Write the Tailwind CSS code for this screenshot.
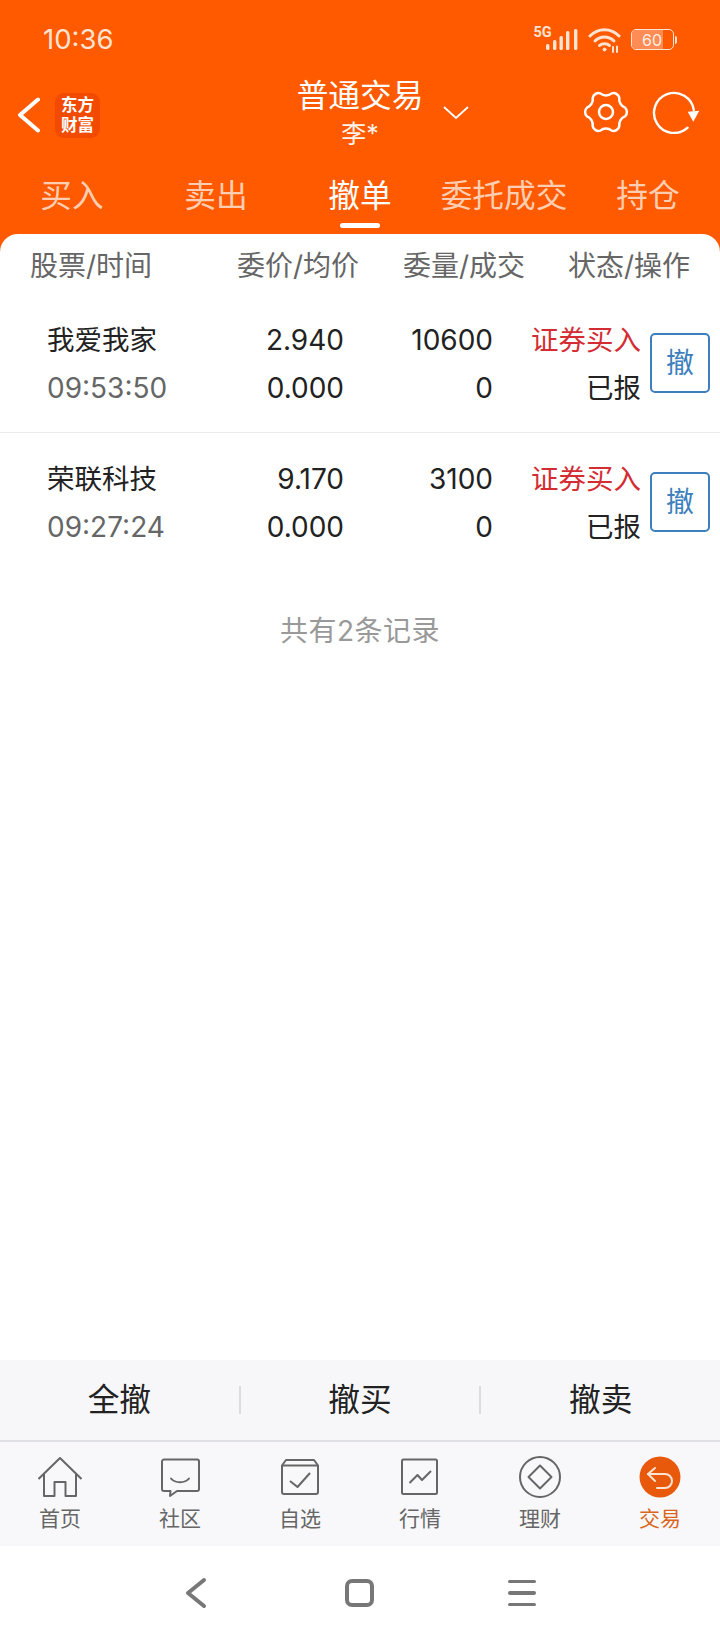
<!DOCTYPE html>
<html lang="zh-CN">
<head>
<meta charset="utf-8">
<script src="https://cdn.jsdelivr.net/npm/@tailwindcss/browser@4"></script>
</head>
<body class="m-0">
<div class="w-[720px] h-[1640px] flex flex-col bg-white overflow-hidden font-['Inter','Noto_Sans_CJK_SC',sans-serif]">

  <div class="bg-[#ff5a00]">
    <!-- status bar -->
    <div class="h-[78px] flex items-center justify-between pl-[43px] pr-[43px] pt-[1px]">
      <span class="text-[27.500px] leading-none text-[#fde3d2]">10:36</span>
      <div class="flex items-center gap-[10px]">
        <div class="relative w-[43px] h-[26px]">
          <span class="absolute left-[-1px] top-[-2px] text-[14.500px] leading-[16px] font-bold text-[#fde3d2] font-['Roboto']">5G</span>
          <svg width="43" height="26" viewBox="0 0 43 26" class="text-[#fde3d2]">
            <g fill="currentColor">
              <rect x="11" y="17" width="3.400" height="6" rx="1.500"/>
              <rect x="18" y="13" width="3.400" height="10" rx="1.500"/>
              <rect x="24.500" y="9" width="3.400" height="14" rx="1.500"/>
              <rect x="31" y="4" width="3.400" height="19" rx="1.500"/>
              <rect x="39" y="2" width="3.400" height="21" rx="1.500"/>
            </g>
          </svg>
        </div>
        <svg width="33" height="26" viewBox="0 0 33 26" fill="none" stroke="#fde3d2" stroke-width="3" stroke-linecap="round">
          <path d="M2 9C10 0.500 23 0.500 31 9"/>
          <path d="M7 14C12 8.500 21 8.500 26 14"/>
          <path d="M11.500 18.500C14 16 19 16 21.500 18.500"/>
          <circle cx="16.500" cy="22.500" r="1.500" fill="#fde3d2" stroke-width="1"/>
          <path d="M25 20V25M29 19.500V25" stroke-width="2"/>
        </svg>
        <div class="flex items-center gap-[1px]">
          <div class="relative w-[43px] h-[21px] rounded-[5px] border-[1.500px] border-[#fde3d2] overflow-hidden flex items-center justify-center">
            <div class="absolute left-0 top-0 bottom-0 w-[31px] bg-[#ff8b55]"></div>
            <span class="relative text-[16px] leading-none text-[#fff0e6]">60</span>
          </div>
          <div class="w-[2.500px] h-[8px] rounded-r-full bg-[#fde3d2]"></div>
        </div>
      </div>
    </div>

    <!-- title bar -->
    <div class="relative h-[78px] flex items-center justify-between pl-[17px] pr-[19px]">
      <div class="flex items-center gap-[15px] mt-[-4px]">
        <svg width="23" height="36" viewBox="0 0 23 36" fill="none" stroke="#fff" stroke-width="4" stroke-linecap="round" stroke-linejoin="round">
          <path d="M21 2.500L3 18L21 33.500"/>
        </svg>
        <div class="w-[45px] h-[45px] rounded-[9px] bg-[#f24b00] flex flex-col items-center justify-center text-white text-[16.500px] leading-[20px] font-bold">
          <span>东方</span><span>财富</span>
        </div>
      </div>
      <div class="absolute left-0 right-0 top-0 flex flex-col items-center text-white pointer-events-none">
        <span class="text-[31.700px] leading-[36px]">普通交易</span>
        <span class="text-[25px] leading-[30px] mt-[5px] text-[#fff3ea]">李*</span>
      </div>
      <svg width="26" height="15" viewBox="0 0 26 15" fill="none" stroke="#fff" stroke-width="1.800" class="absolute left-[443px] top-[27px]">
        <path d="M1 2L13 13L25 2"/>
      </svg>
      <div class="flex items-center gap-[22px] mt-[-10px]">
        <svg width="46" height="46" viewBox="-23 -23 46 46" fill="none" stroke="#fff" stroke-width="2.500">
          <path d="M19 -4.390A6 6 0 0 1 19 4.390A9 9 0 0 0 13.300 14.260A6 6 0 0 1 5.700 18.650A9 9 0 0 0 -5.700 18.650A6 6 0 0 1 -13.300 14.260A9 9 0 0 0 -19 4.390A6 6 0 0 1 -19 -4.390A9 9 0 0 0 -13.300 -14.260A6 6 0 0 1 -5.700 -18.650A9 9 0 0 0 5.700 -18.650A6 6 0 0 1 13.300 -14.260A9 9 0 0 0 19 -4.390Z"/>
          <circle r="7"/>
        </svg>
        <svg width="50" height="44" viewBox="0 0 50 44" fill="none">
          <path d="M42.800 20A20 20 0 1 0 36.600 37.700" stroke="#fff" stroke-width="2.400" stroke-linecap="round"/>
          <path d="M36.700 21.700L48.300 20.700L42.300 31.700Z" fill="#fff"/>
        </svg>
      </div>
    </div>

    <!-- tabs -->
    <div class="relative h-[78px] grid grid-cols-5 text-center text-[31.700px] leading-[40px] text-[#ffcdb2]">
      <div class="mt-[20px]">买入</div>
      <div class="mt-[20px]">卖出</div>
      <div class="mt-[20px] text-white">撤单</div>
      <div class="mt-[20px]">委托成交</div>
      <div class="mt-[20px]">持仓</div>
      <div class="absolute left-[340px] top-[67px] w-[40px] h-[5px] rounded-full bg-white"></div>
    </div>
  </div>

  <!-- list -->
  <div class="flex-1 bg-[#ff5a00] min-h-0">
    <div class="h-full bg-white rounded-t-[18px]">
      <div class="h-[61px] flex items-center text-[28px] leading-none text-[#666] pt-[3px]">
        <span class="w-[359px] pl-[30px] flex justify-between"><span>股票/时间</span><span>委价/均价</span></span>
        <span class="w-[166px] text-right">委量/成交</span>
        <span class="w-[165px] text-right">状态/操作</span>
      </div>

      <div class="h-[138px] flex items-center border-b border-[#ececec]">
        <div class="w-[344px] pl-[47px] flex justify-between text-[28px] leading-[48px] text-[#222]">
          <div><div class="text-[27.500px]">我爱我家</div><div class="text-[#666]">09:53:50</div></div>
          <div class="text-right"><div>2.940</div><div>0.000</div></div>
        </div>
        <div class="w-[149px] text-right text-[28px] leading-[48px] text-[#222]"><div>10600</div><div>0</div></div>
        <div class="w-[148px] text-right text-[27.500px] leading-[48px] text-[#222]"><div class="text-[#d42c33]">证券买入</div><div>已报</div></div>
        <div class="ml-[9px] mt-[-2px] w-[60px] h-[60px] rounded-[5px] border-2 border-[#3d7fbd] text-[#3d7fbd] text-[28px] flex items-center justify-center">撤</div>
      </div>

      <div class="h-[139px] flex items-center">
        <div class="w-[344px] pl-[47px] flex justify-between text-[28px] leading-[48px] text-[#222]">
          <div><div class="text-[27.500px]">荣联科技</div><div class="text-[#666]">09:27:24</div></div>
          <div class="text-right"><div>9.170</div><div>0.000</div></div>
        </div>
        <div class="w-[149px] text-right text-[28px] leading-[48px] text-[#222]"><div>3100</div><div>0</div></div>
        <div class="w-[148px] text-right text-[27.500px] leading-[48px] text-[#222]"><div class="text-[#d42c33]">证券买入</div><div>已报</div></div>
        <div class="ml-[9px] mt-[-2px] w-[60px] h-[60px] rounded-[5px] border-2 border-[#3d7fbd] text-[#3d7fbd] text-[28px] flex items-center justify-center">撤</div>
      </div>

      <div class="text-center text-[28px] leading-[40px] tracking-[0.500px] text-[#999] mt-[39px]">共有2条记录</div>
    </div>
  </div>

  <!-- bulk actions -->
  <div class="h-[82px] bg-[#f7f7fa] border-b-2 border-[#dfe0e3] flex items-center text-[31.700px] leading-none text-[#222]">
    <div class="flex-1 text-center">全撤</div>
    <div class="w-[2px] h-[28px] bg-[#dcdce0]"></div>
    <div class="flex-1 text-center">撤买</div>
    <div class="w-[2px] h-[28px] bg-[#dcdce0]"></div>
    <div class="flex-1 text-center">撤卖</div>
  </div>

  <!-- tab bar -->
  <div class="h-[104px] bg-[#f8f8fa] grid grid-cols-6 text-[21px] leading-[28px] text-[#666] pt-[14px]">
    <div class="flex flex-col items-center">
      <svg width="44" height="44" viewBox="0 0 44 44" fill="none" stroke="#666" stroke-width="2" stroke-linejoin="round">
        <path d="M0.500 23L22 2L43.500 23"/>
        <path d="M6 17V40H16.500V26H27.500V40H38V17"/>
      </svg>
      <span class="mt-[5px]">首页</span>
    </div>
    <div class="flex flex-col items-center">
      <svg width="44" height="44" viewBox="0 0 44 44" fill="none" stroke="#666" stroke-width="2" stroke-linejoin="round">
        <path d="M6 3.500H39A2 2 0 0 1 41 5.500V33A2 2 0 0 1 39 35H19L12 40L12.500 35H6A2 2 0 0 1 4 33V5.500A2 2 0 0 1 6 3.500Z"/>
        <path d="M13 22.500C17 27.500 27 27.500 31 22.500" stroke-linecap="round"/>
      </svg>
      <span class="mt-[5px]">社区</span>
    </div>
    <div class="flex flex-col items-center">
      <svg width="44" height="44" viewBox="0 0 44 44" fill="none" stroke="#666" stroke-width="2" stroke-linejoin="round">
        <path d="M8 4H36L40 9.500V36A2 2 0 0 1 38 38H6A2 2 0 0 1 4 36V9.500Z"/>
        <path d="M4 9.500H40"/>
        <path d="M12 25L19.500 31L32 17"/>
      </svg>
      <span class="mt-[5px]">自选</span>
    </div>
    <div class="flex flex-col items-center">
      <svg width="44" height="44" viewBox="0 0 44 44" fill="none" stroke="#666" stroke-width="2" stroke-linejoin="round">
        <rect x="4" y="3.500" width="35" height="34.500" rx="1.500"/>
        <path d="M11.500 27L19.500 19L24 24L33 15"/>
      </svg>
      <span class="mt-[5px]">行情</span>
    </div>
    <div class="flex flex-col items-center">
      <svg width="44" height="44" viewBox="0 0 44 44" fill="none" stroke="#666" stroke-width="2" stroke-linejoin="round">
        <circle cx="22" cy="21" r="20"/>
        <path d="M22 9.500L33.500 21L22 32.500L10.500 21Z"/>
      </svg>
      <span class="mt-[5px]">理财</span>
    </div>
    <div class="flex flex-col items-center text-[#d9661f]">
      <svg width="44" height="44" viewBox="0 0 44 44" fill="none" stroke="#fde3d2" stroke-width="2" stroke-linecap="round" stroke-linejoin="round">
        <circle cx="22" cy="21" r="20.500" fill="#e8590c" stroke="none"/>
        <path d="M17 12L10 18L17 25"/>
        <path d="M10 18H27A7 7 0 0 1 27 32H19"/>
      </svg>
      <span class="mt-[5px]">交易</span>
    </div>
  </div>

  <!-- system nav -->
  <div class="h-[94px] bg-white flex items-center pl-[184px]">
    <svg width="24" height="32" viewBox="0 0 24 32" fill="none" stroke="#777" stroke-width="4" stroke-linecap="round" stroke-linejoin="round">
      <path d="M20 3L4 16L20 29"/>
    </svg>
    <div class="ml-[137px] w-[29px] h-[28px] rounded-[7px] border-[4px] border-[#777]"></div>
    <div class="ml-[134px] w-[28px] flex flex-col gap-[8px]">
      <div class="h-[3.500px] rounded-full bg-[#777]"></div>
      <div class="h-[3.500px] rounded-full bg-[#777]"></div>
      <div class="h-[3.500px] rounded-full bg-[#777]"></div>
    </div>
  </div>
</div>
</body>
</html>
